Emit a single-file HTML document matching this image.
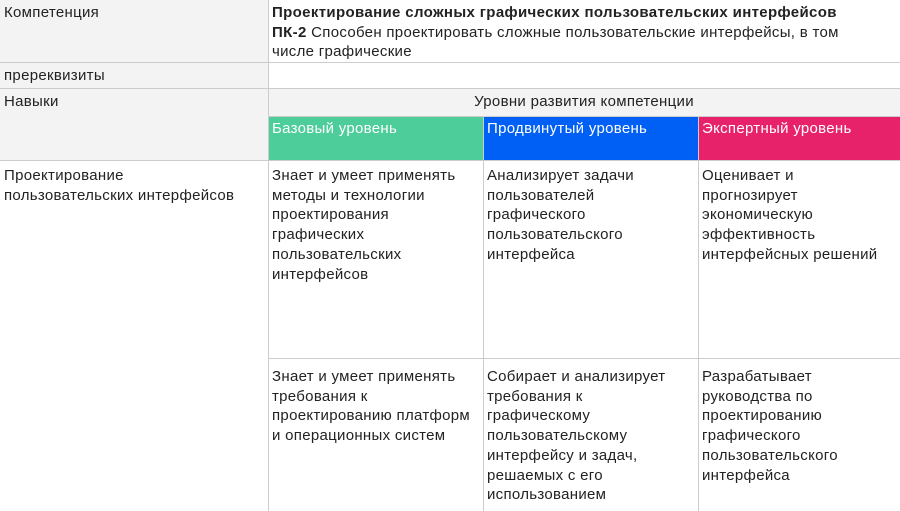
<!DOCTYPE html>
<html><head><meta charset="utf-8"><style>
body{margin:0;width:900px;height:511px;overflow:hidden;background:#fff;font-family:"Liberation Sans",sans-serif;font-size:15px;letter-spacing:0.3px;color:#222;}
.c{position:absolute;box-sizing:border-box;padding:3px 4px;line-height:19.7px;white-space:nowrap;overflow:hidden}
.g{background:#f3f3f3}
.h{position:absolute;background:#ccc;height:1px}
.v{position:absolute;background:#ccc;width:1px}
b{letter-spacing:0.35px}
</style></head><body>
<div class="c g" style="left:0;top:0;width:268px;height:62px">Компетенция</div>
<div class="c" style="left:268px;top:0;width:632px;height:62px"><b>Проектирование сложных графических пользовательских интерфейсов</b><br><b>ПК-2</b> Способен проектировать сложные пользовательские интерфейсы, в том<br>числе графические</div>
<div class="c g" style="left:0;top:62px;width:268px;height:26px;padding-top:4px">пререквизиты</div>
<div class="c g" style="left:0;top:88px;width:268px;height:72px;padding-top:4px">Навыки</div>
<div class="c g" style="left:268px;top:88px;width:632px;height:28px;text-align:center;padding-top:4px">Уровни развития компетенции</div>
<div class="c" style="left:268px;top:116px;width:215px;height:44px;background:#4ccd9a;color:#fff;padding-top:3px">Базовый уровень</div>
<div class="c" style="left:483px;top:116px;width:215px;height:44px;background:#0060f5;color:#fff;padding-top:3px">Продвинутый уровень</div>
<div class="c" style="left:698px;top:116px;width:202px;height:44px;background:#e8226a;color:#fff;padding-top:3px">Экспертный уровень</div>
<div class="c" style="left:0;top:163px;width:268px">Проектирование<br>пользовательских интерфейсов</div>
<div class="c" style="left:268px;top:163px;width:215px">Знает и умеет применять<br>методы и технологии<br>проектирования<br>графических<br>пользовательских<br>интерфейсов</div>
<div class="c" style="left:483px;top:163px;width:215px">Анализирует задачи<br>пользователей<br>графического<br>пользовательского<br>интерфейса</div>
<div class="c" style="left:698px;top:163px;width:202px">Оценивает и<br>прогнозирует<br>экономическую<br>эффективность<br>интерфейсных решений</div>
<div class="c" style="left:268px;top:364px;width:215px">Знает и умеет применять<br>требования к<br>проектированию платформ<br>и операционных систем</div>
<div class="c" style="left:483px;top:364px;width:215px">Собирает и анализирует<br>требования к<br>графическому<br>пользовательскому<br>интерфейсу и задач,<br>решаемых с его<br>использованием</div>
<div class="c" style="left:698px;top:364px;width:202px">Разрабатывает<br>руководства по<br>проектированию<br>графического<br>пользовательского<br>интерфейса</div>
<div class="h" style="left:0;top:62px;width:900px"></div>
<div class="h" style="left:0;top:88px;width:900px"></div>
<div class="h" style="left:268px;top:116px;width:632px"></div>
<div class="h" style="left:0;top:160px;width:900px"></div>
<div class="h" style="left:268px;top:358px;width:632px"></div>
<div class="v" style="left:268px;top:0;height:511px"></div>
<div class="v" style="left:483px;top:116px;height:395px"></div>
<div class="v" style="left:698px;top:116px;height:395px"></div>
</body></html>
